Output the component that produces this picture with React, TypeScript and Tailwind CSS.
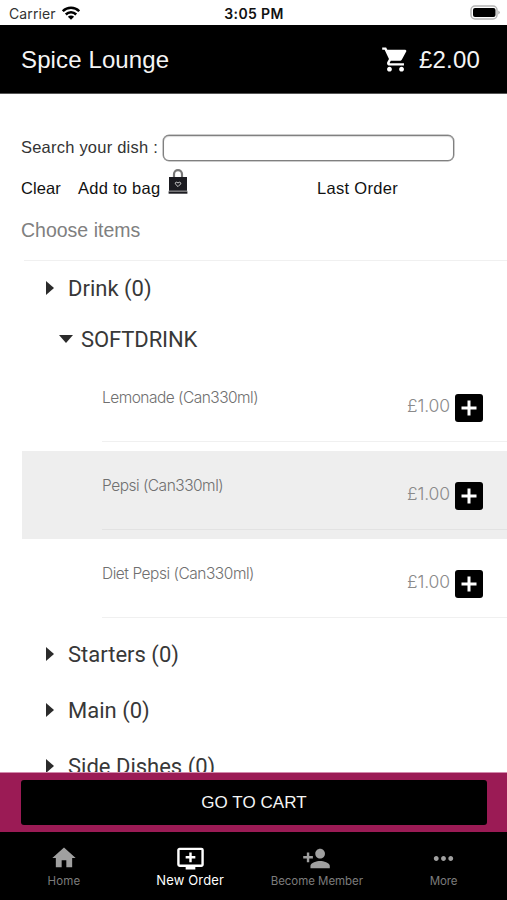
import React from "react";
import { MdAddToQueue, MdHome, MdMoreHoriz, MdPersonAdd, MdShoppingCart } from "react-icons/md";

const items = [
  { name: "Lemonade (Can330ml)", track: "tracking-[-0.52px]", active: false },
  { name: "Pepsi (Can330ml)", track: "tracking-[-0.5px]", active: true },
  { name: "Diet Pepsi (Can330ml)", track: "tracking-[-0.47px]", active: false },
];

function StatusBar() {
  return (
    <div className="flex h-[25px] items-center bg-white pl-[9px] pr-[6px] pt-[3px] font-['Inter',sans-serif] text-[14px] text-[#333]">
      <div className="flex flex-1 items-center gap-[6px]">
        <span className="-mt-[2px] tracking-[0.1px]">Carrier</span>
        <svg width="18" height="14" viewBox="0 0 18 14" className="-mt-[3px]" fill="none" stroke="#000" strokeWidth="2.5">
          <path d="M.8 5.2a11.6 11.6 0 0 1 16.4 0M3.8 8.5a7.3 7.3 0 0 1 10.4 0" />
          <path d="M9 13.8 5.9 10.8a4.4 4.4 0 0 1 6.2 0Z" fill="#000" stroke="none" />
        </svg>
      </div>
      <span className="-ml-[2px] -mt-[2px] text-[14px] font-semibold tracking-[0.35px] text-[#111]">3:05 PM</span>
      <div className="flex flex-1 justify-end">
        <svg width="31" height="15" viewBox="0 0 31 15" className="-mt-[3px]">
          <rect x="1" y="1" width="26" height="13" rx="4" fill="#fff" stroke="#b5b5b5" strokeWidth="1.5" />
          <rect x="3" y="3" width="22.5" height="9" rx="2" fill="#000" />
          <path d="M28.3 5.5q3 2 0 4Z" fill="#aaa" />
        </svg>
      </div>
    </div>
  );
}

function BagIcon() {
  return (
    <svg width="20" height="26" viewBox="0 0 20 26" className="-mt-[12px] ml-[8px] shrink-0">
      <path d="M6 9V5.2a4 4 0 0 1 8 0V9" fill="none" stroke="#777" strokeWidth="2.2" />
      <path d="M1 8h18v13.8H1z" fill="#1b1b20" />
      <path d="M.6 21.8h18.8v.9H.6z" fill="#77777a" />
      <path d="M.6 22.7h18.8v2H.6z" fill="#1b1b20" />
      <path d="M10 17.6 7.2 14.8q0-1.7 1.5-1.6L10 14l1.3-.8q1.5-.1 1.5 1.6Z" fill="none" stroke="#ccc" strokeWidth="1" />
    </svg>
  );
}

function Category({ name }: { name: string }) {
  return (
    <div className="flex h-14 items-center pb-[2px] pl-[46px] font-['Roboto',sans-serif] text-[22px] text-[#383838]">
      <svg width="8" height="14" viewBox="0 0 8 14" className="mr-[14px]">
        <path d="M0 0 8 7 0 14Z" fill="#2b2b2b" />
      </svg>
      <span>{name}</span>
    </div>
  );
}

function Item({ name, track, active }: { name: string; track: string; active: boolean }) {
  return (
    <div className={`ml-[22px] h-[88px] pl-[80px] ${active ? "bg-[#eee]" : ""}`}>
      <div className={`flex h-[79px] justify-between border-b pr-[24px] font-['Inter',sans-serif] font-light ${active ? "border-[#e2e2e2]" : "border-[#f0f0f0]"}`}>
        <span className={`mt-[25px] text-[15.5px] leading-5 text-[#707070] ${track}`}>{name}</span>
        <div className="mt-[31px] flex h-7">
          <span className="mr-[5px] -mt-[1px] text-[17.5px] leading-[26px] text-[#8a8a8a] tracking-[-0.1px]">£1.00</span>
          <svg width="28" height="28" viewBox="0 0 28 28">
            <rect width="28" height="28" rx="3" fill="#000" />
            <path d="M14 6.5v15M6.5 14h15" stroke="#fff" strokeWidth="3" />
          </svg>
        </div>
      </div>
    </div>
  );
}

function Tab({ label, icon, active = false, track }: { label: string; icon: React.ReactNode; active?: boolean; track: string }) {
  return (
    <div className={`flex flex-col items-center pt-[12px] font-['Inter',sans-serif] ${active ? "text-white" : "text-[#a0a0a0]"}`}>
      <div className="flex h-[28px] items-center justify-center">{icon}</div>
      <span className={`leading-4 whitespace-nowrap ${active ? "text-[13px]" : "mt-[1px] text-[11.5px] text-[#7c7c7c]"} ${track}`}>{label}</span>
    </div>
  );
}

export default function App() {
  return (
    <div className="flex h-[900px] w-[507px] flex-col overflow-hidden bg-white font-['Liberation_Sans',sans-serif]">
      <StatusBar />
      <header className="flex h-[69px] items-center border-b border-[#555] bg-black pl-[21px] pr-[27px] pt-[2px] text-[24px] text-[#f5f5f5]">
        <h1 className="flex-1 tracking-[0.12px]">Spice Lounge</h1>
        <MdShoppingCart size={29} className="-mt-[2px] mr-[9px] text-white" />
        <span className="tracking-[0.2px]">£2.00</span>
      </header>
      <main className="h-[678px] overflow-hidden">
        <div className="mt-[41px] flex h-[27px] items-center pl-[21px] text-[16.5px] text-[#333]">
          <label htmlFor="dish" className="-mt-[2px] w-[142px] whitespace-nowrap tracking-[0.22px]">Search your dish :</label>
          <input id="dish" className="-mt-px h-[26px] w-[291px] rounded-[6px] border-[1.5px] border-[#808080] bg-white shadow-[inset_0_1px_1px_#ddd,0_0_0_0.5px_#999]" />
        </div>
        <div className="mt-[14px] flex h-6 items-center pl-[21px] text-[16.5px] text-[#111]">
          <span className="w-[57px] tracking-[0.1px]">Clear</span>
          <span className="tracking-[0.25px]">Add to bag</span>
          <BagIcon />
          <span className="ml-auto mr-[109px] tracking-[0.3px]">Last Order</span>
        </div>
        <div className="mt-[18px] h-6 pl-[21px] text-[19.5px] leading-6 text-[#808080]">Choose items</div>
        <div className="ml-[24px] mt-[18px] border-t border-[#f0f0f0]" />
        <Category name="Drink (0)" />
        <div className="flex h-[46px] items-center pb-[2px] pl-[59px] font-['Roboto',sans-serif] text-[22px] text-[#383838]">
          <svg width="14" height="8" viewBox="0 0 14 8" className="mr-[8px]">
            <path d="M0 0H14L7 8Z" fill="#2b2b2b" />
          </svg>
          <span className="tracking-[-0.1px]">SOFTDRINK</span>
        </div>
        {items.map((item) => <Item key={item.name} {...item} />)}
        <Category name="Starters (0)" />
        <Category name="Main (0)" />
        <Category name="Side Dishes (0)" />
      </main>
      <div className="h-[60px] shrink-0 border-t border-[#d28aac] bg-[#9b1b55] pl-[21px] pr-[20px] pt-[7px]">
        <button className="h-[45px] w-full rounded-[3px] bg-black text-[17px] tracking-[0.05px] text-[#f5f5f5]">GO TO CART</button>
      </div>
      <nav className="grid h-[68px] shrink-0 grid-cols-4 bg-black">
        <Tab label="Home" icon={<MdHome size={28} className="ml-[2px]" />} track="tracking-[0.1px] pl-px" />
        <Tab label="New Order" icon={<MdAddToQueue size={29} />} active track="tracking-[0.15px]" />
        <Tab label="Become Member" icon={<MdPersonAdd size={29} />} track="tracking-[-0.05px]" />
        <Tab label="More" icon={<MdMoreHoriz size={29} />} track="tracking-[-0.1px]" />
      </nav>
    </div>
  );
}
